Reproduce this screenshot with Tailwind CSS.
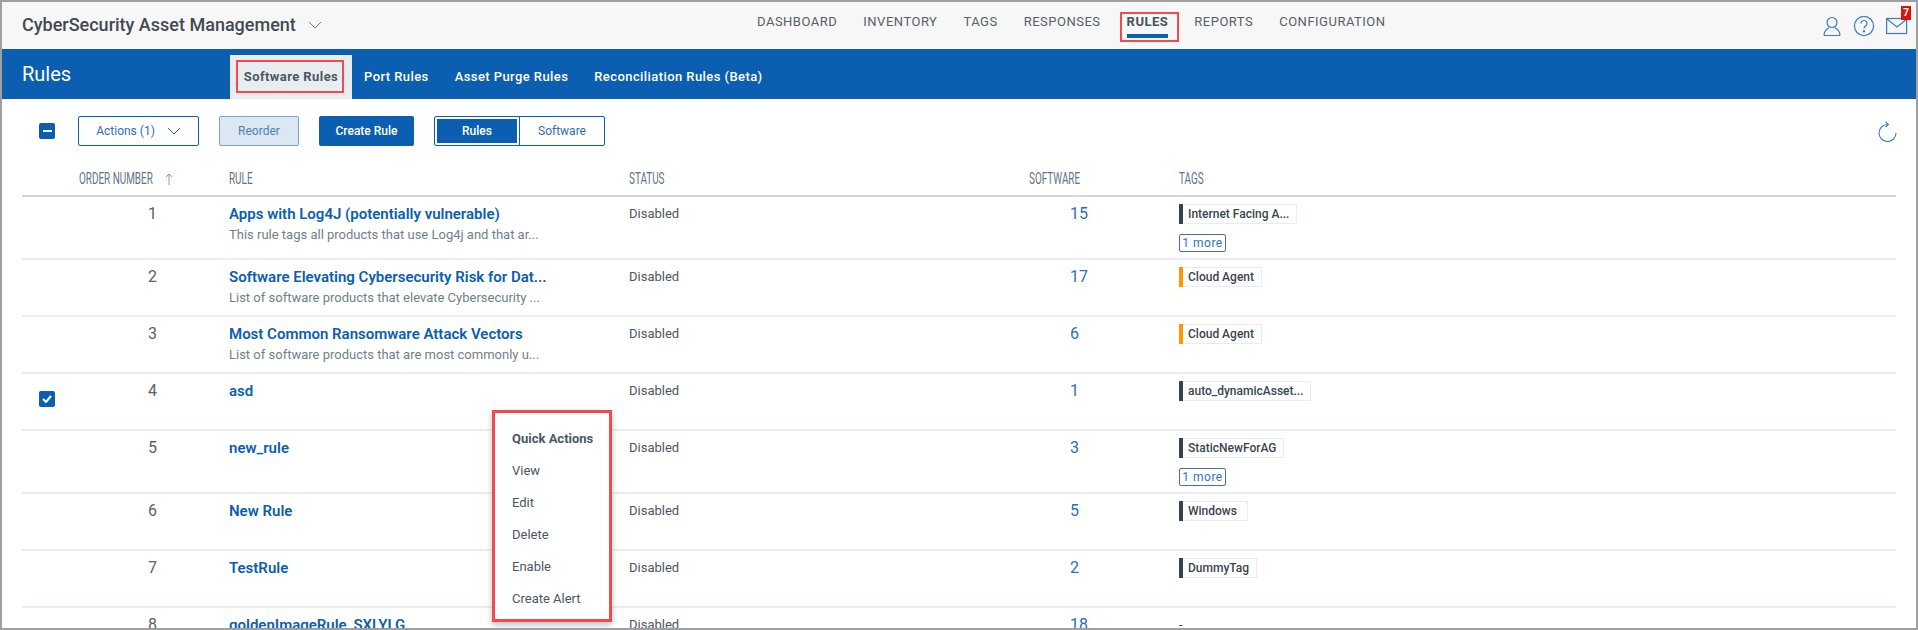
<!DOCTYPE html>
<html lang="en">
<head>
    <meta charset="UTF-8">
    <title>Rules</title>
    <script src="https://cdn.jsdelivr.net/npm/@tailwindcss/browser@4"></script>
</head>
<body class="bg-white">
    <div class="relative w-[1918px] h-[630px] border-2 border-[#a0a0a0] overflow-hidden font-[Roboto,sans-serif] text-[13px] text-[#4b5761]">
        <!-- top bar -->
        <header class="relative flex items-center h-[47px] bg-[#f7f7f7]">
            <div class="flex items-center ml-[20px] text-[18px] font-medium text-[#3f4a52] leading-none pb-[2px]">
                CyberSecurity Asset Management
                <svg class="ml-[12px] mt-[1px]" width="14" height="9" viewBox="0 0 14 9" fill="none" stroke="#5b7b98" stroke-width="1"><path d="M1 1l6 6 6-6"/></svg>
            </div>
            <nav class="absolute left-[755px] top-[10px] flex gap-[26px] text-[13px] tracking-[0.5px] leading-5 text-[#555f68]">
                <span>DASHBOARD</span>
                <span>INVENTORY</span>
                <span>TAGS</span>
                <span>RESPONSES</span>
                <span class="relative font-bold text-[#46525c]">RULES<i class="absolute left-0 right-0 top-[22px] h-[4px] bg-[#0b5eb0]"></i></span>
                <span>REPORTS</span>
                <span>CONFIGURATION</span>
            </nav>
            <div class="absolute left-[1118px] top-[10px] w-[59px] h-[30px] border-2 border-[#f44a4f]"></div>
            <div class="ml-auto mr-[8px] flex items-center gap-[11px] relative">
                <svg width="20" height="20" viewBox="0 0 20 20" fill="none" stroke="#3d7cc4" stroke-width="1.2"><circle cx="10" cy="6.500" r="5"/><path d="M2 19.500c0-4.500 2.800-6.500 5-7.700M18 19.500c0-4.500-2.800-6.500-5-7.700M2 19.500h16"/></svg>
                <svg width="22" height="22" viewBox="0 0 22 22" fill="none" stroke="#3d7cc4" stroke-width="1.2"><circle cx="11" cy="11" r="9.600"/><path d="M8 8.500c0-4 6-4 6 0 0 2.500-3 2.500-3 5"/><circle cx="11" cy="16.200" r=".6"/></svg>
                <svg width="22" height="18" viewBox="0 0 22 18" fill="none" stroke="#3d7cc4" stroke-width="1.2"><rect x=".6" y="1.500" width="20" height="15"/><path d="M1 2l10 8 10-8"/></svg>
                <span class="absolute right-[-3px] top-[-9px] w-[10px] h-[14px] bg-[#e0120c] text-white text-[10px] font-bold leading-[14px] text-center">7</span>
            </div>
        </header>

        <!-- blue bar -->
        <div class="flex h-[50px] bg-[#0b5eb0] text-white">
            <div class="w-[228px] pl-[20px] pt-[13px] text-[20px] leading-6">Rules</div>
            <div class="flex items-end gap-[26px] text-[13px] font-medium tracking-[0.42px] leading-none">
                <div class="relative w-[122px] h-[44px] bg-[#e8eef0] text-[#4b5761] font-bold flex items-center justify-center pb-[1px]">Software Rules
                    <i class="absolute left-[6px] top-[5px] w-[108px] h-[33px] border-2 border-[#f44a4f]"></i>
                </div>
                <span class="self-center -ml-[14px] pt-[4px]">Port Rules</span>
                <span class="self-center pt-[4px]">Asset Purge Rules</span>
                <span class="self-center pt-[4px]">Reconciliation Rules (Beta)</span>
            </div>
        </div>

        <!-- toolbar -->
        <div class="relative flex items-center h-[30px] mt-[17px] text-[12px] leading-none">
            <span class="ml-[37px] w-[16px] h-[16px] rounded-[2px] bg-[#0b5eb0] flex items-center justify-center"><i class="w-[9px] h-[2px] bg-white"></i></span>
            <button class="ml-[23px] w-[121px] h-[30px] rounded-[2px] border border-[#0b5eb0] text-[#2f6db5] flex items-center justify-center gap-[12px]">Actions (1)
                <svg width="14" height="8" viewBox="0 0 14 8" fill="none" stroke="#2f6db5" stroke-width="1"><path d="M1 1l6 6 6-6"/></svg>
            </button>
            <button class="ml-[20px] w-[80px] h-[30px] rounded-[2px] border border-[#79a5d4] bg-[#dbe7f3] text-[#4f7faf]">Reorder</button>
            <button class="ml-[20px] w-[95px] h-[30px] rounded-[2px] bg-[#0b5eb0] text-white font-medium">Create Rule</button>
            <div class="ml-[20px] w-[171px] h-[30px] rounded-[2px] border border-[#0b5eb0] flex">
                <span class="ml-[2px] my-[2px] w-[80px] bg-[#0b5eb0] text-white font-medium flex items-center justify-center">Rules</span>
                <span class="ml-[2px] flex-1 border-l border-[#0b5eb0] text-[#2f6db5] flex items-center justify-center">Software</span>
            </div>
            <svg class="absolute left-[1876px] top-[5px]" width="19" height="21" viewBox="0 0 19 21" fill="none" stroke="#3d7cc4" stroke-width="1.1"><path d="M18 12A8.500 8.500 0 1 1 9.500 3.500"/><path d="M7.500 .8l3 2.700-3 2.500"/></svg>
        </div>

        <!-- table -->
        <div class="mx-[20px] mt-[17px]">
            <div class="grid grid-cols-[126px_81px_400px_400px_150px_1fr] h-[34px] border-b-2 border-[#d4d6d8] items-start text-[16px] text-[#5f7384] leading-[32px] whitespace-nowrap">
                <div class="col-span-2 pl-[57px] flex items-center gap-[9px]">
                    <span class="w-[77px] origin-left scale-x-[0.62]">ORDER NUMBER</span>
                    <svg width="8" height="12" viewBox="0 0 8 12" fill="none" stroke="#7b9cc0" stroke-width="1"><path d="M4 12V1M1 4l3-3 3 3"/></svg>
                </div>
                <div class="origin-left scale-x-[0.62]">RULE</div>
                <div class="origin-left scale-x-[0.62]">STATUS</div>
                <div class="origin-left scale-x-[0.62]">SOFTWARE</div>
                <div class="origin-left scale-x-[0.62]">TAGS</div>
            </div>
            <div id="rows"></div>
        </div>

        <!-- quick actions menu -->
        <div class="absolute left-[490px] top-[408px] w-[120px] h-[212px] border-[3px] border-[#f44a4f] bg-white shadow-[0_3px_6px_rgba(60,80,100,0.35)]">
            <ul class="pl-[17px] pt-[10px] leading-[32px] text-[#4b5761]">
                <li class="font-bold">Quick Actions</li>
                <li>View</li>
                <li>Edit</li>
                <li>Delete</li>
                <li>Enable</li>
                <li>Create Alert</li>
            </ul>
        </div>
    </div>

    <script>
        const dark = 'bg-[#33444e]';
        const orange = 'bg-[#ff9800]';
        const rules = [
            { n: 1, name: 'Apps with Log4J (potentially vulnerable)', desc: 'This rule tags all products that use Log4j and that ar...', sw: 15, tag: 'Internet Facing A...', bar: dark, more: true, h: 'h-[63px]' },
            { n: 2, name: 'Software Elevating Cybersecurity Risk for Dat...', desc: 'List of software products that elevate Cybersecurity ...', sw: 17, tag: 'Cloud Agent', bar: orange },
            { n: 3, name: 'Most Common Ransomware Attack Vectors', desc: 'List of software products that are most commonly u...', sw: 6, tag: 'Cloud Agent', bar: orange },
            { n: 4, name: 'asd', desc: '', sw: 1, tag: 'auto_dynamicAsset...', bar: dark, checked: true },
            { n: 5, name: 'new_rule', desc: '', sw: 3, tag: 'StaticNewForAG', bar: dark, more: true, h: 'h-[63px]' },
            { n: 6, name: 'New Rule', desc: '', sw: 5, tag: 'Windows', bar: dark, extra: 'pr-[10px]' },
            { n: 7, name: 'TestRule', desc: '', sw: 2, tag: 'DummyTag', bar: dark },
            { n: 8, name: 'goldenImageRule_SXLYLG', desc: '', sw: 18, tag: null }
        ];

        document.getElementById('rows').innerHTML = rules.map(r => `
            <div class="grid grid-cols-[126px_81px_400px_400px_150px_1fr] ${r.h || 'h-[57px]'} border-b-2 border-[#e9edf0]">
                <div class="pl-[17px] pt-[17px]">
                    ${r.checked ? `<span class="w-[16px] h-[16px] rounded-[2px] bg-[#0b5eb0] flex items-center justify-center"><svg width="10" height="8" viewBox="0 0 10 8" fill="none" stroke="#fff" stroke-width="2"><path d="M1 4l3 3 5-6"/></svg></span>` : ''}
                </div>
                <div class="pt-[7px] text-[16px] leading-5 text-[#5a6268]">${r.n}</div>
                <div class="pt-[7px]">
                    <div class="text-[15px] font-semibold leading-5 text-[#0b5eb0]">${r.name}</div>
                    <div class="mt-[1px] text-[13px] leading-5 text-[#6f7f88]">${r.desc}</div>
                </div>
                <div class="pt-[7px] leading-5">Disabled</div>
                <div class="pt-[7px] pl-[41px] text-[16px] leading-5 text-[#2a6ebb]">${r.sw}</div>
                <div class="pt-[7px]">
                    ${r.tag ? `<div class="flex">
                        <span class="flex h-[20px] border-l-[4px] ${r.bar === orange ? 'border-[#ff9800]' : 'border-[#33444e]'}">
                            <span class="border border-l-0 border-[#e8edf0] pl-[5px] pr-[7px] ${r.extra || ''} text-[12px] font-medium leading-[18px] text-[#39454e]">${r.tag}</span>
                        </span>
                    </div>` : `<span class="text-[12px] leading-5 text-[#39454e]">-</span>`}
                    ${r.more ? `<div class="mt-[10px] w-[47px] h-[18px] rounded-[2px] border border-[#4f6f88] text-center text-[12px] tracking-[0.5px] leading-[16px] text-[#2f75c0]">1 more</div>` : ''}
                </div>
            </div>`).join('');
    </script>
</body>
</html>
